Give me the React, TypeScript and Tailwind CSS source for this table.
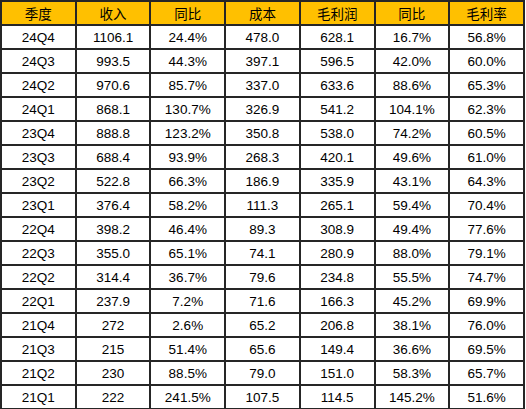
import React from "react";

const headers = ["季度", "收入", "同比", "成本", "毛利润", "同比", "毛利率"];
const rows: string[][] = [
  ["24Q4", "1106.1", "24.4%", "478.0", "628.1", "16.7%", "56.8%"],
  ["24Q3", "993.5", "44.3%", "397.1", "596.5", "42.0%", "60.0%"],
  ["24Q2", "970.6", "85.7%", "337.0", "633.6", "88.6%", "65.3%"],
  ["24Q1", "868.1", "130.7%", "326.9", "541.2", "104.1%", "62.3%"],
  ["23Q4", "888.8", "123.2%", "350.8", "538.0", "74.2%", "60.5%"],
  ["23Q3", "688.4", "93.9%", "268.3", "420.1", "49.6%", "61.0%"],
  ["23Q2", "522.8", "66.3%", "186.9", "335.9", "43.1%", "64.3%"],
  ["23Q1", "376.4", "58.2%", "111.3", "265.1", "59.4%", "70.4%"],
  ["22Q4", "398.2", "46.4%", "89.3", "308.9", "49.4%", "77.6%"],
  ["22Q3", "355.0", "65.1%", "74.1", "280.9", "88.0%", "79.1%"],
  ["22Q2", "314.4", "36.7%", "79.6", "234.8", "55.5%", "74.7%"],
  ["22Q1", "237.9", "7.2%", "71.6", "166.3", "45.2%", "69.9%"],
  ["21Q4", "272", "2.6%", "65.2", "206.8", "38.1%", "76.0%"],
  ["21Q3", "215", "51.4%", "65.6", "149.4", "36.6%", "69.5%"],
  ["21Q2", "230", "88.5%", "79.0", "151.0", "58.3%", "65.7%"],
  ["21Q1", "222", "241.5%", "107.5", "114.5", "145.2%", "51.6%"],
];

export default function App() {
  return (
    <div className="w-[526px] h-[409px] bg-white overflow-hidden">
      <table
        className="w-[525px] border-collapse table-fixed text-[13.5px] text-black"
        style={{ fontFamily: '"Liberation Sans", Arial, "Noto Sans CJK SC", sans-serif' }}
      >
        <thead>
          <tr className="h-[24px] bg-[#ffc000]">
            {headers.map((h, i) => (
              <th
                key={i}
                className="border-2 border-[#262626] font-normal text-center p-0 pt-[1px] leading-none"
                style={{ fontFamily: '"Noto Sans CJK SC", sans-serif' }}
              >
                {h}
              </th>
            ))}
          </tr>
        </thead>
        <tbody>
          {rows.map((r, ri) => (
            <tr key={ri} className="h-[24px]">
              {r.map((c, ci) => (
                <td key={ci} className="border-2 border-[#262626] text-center p-0 pt-[1px] leading-none">
                  {c}
                </td>
              ))}
            </tr>
          ))}
        </tbody>
      </table>
    </div>
  );
}
